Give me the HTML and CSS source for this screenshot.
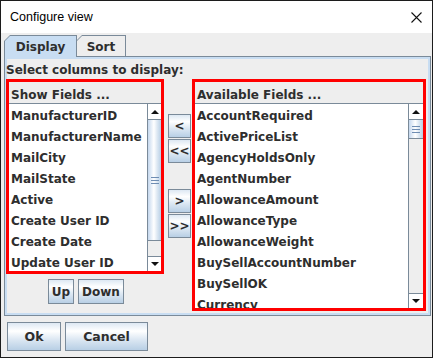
FILE: index.html
```html
<!DOCTYPE html>
<html>
<head>
<meta charset="utf-8">
<link rel="stylesheet" href="styles.css">
</head>
<body>
<div class="win">
  <div class="titlebar">
    <span class="title">Configure view</span>
    <svg class="close" width="11" height="11" viewBox="0 0 11 11"><path d="M0.5 0.5L10.5 10.5M10.5 0.5L0.5 10.5" stroke="#111" stroke-width="1.1" fill="none"/></svg>
  </div>
  <div class="tabs">
    <div class="tab sel"><div class="tab-in">Display</div></div>
    <div class="tab sort"><div class="tab-in">Sort</div></div>
  </div>
  <div class="panel">
    <div class="label">Select columns to display:</div>
    <div class="main">
      <div class="leftcol">
        <div class="box box-left">
          <div class="hdr">Show Fields ...</div>
          <div class="list">
            <div class="items">
              <div class="row">ManufacturerID</div>
              <div class="row">ManufacturerName</div>
              <div class="row">MailCity</div>
              <div class="row">MailState</div>
              <div class="row">Active</div>
              <div class="row">Create User ID</div>
              <div class="row">Create Date</div>
              <div class="row">Update User ID</div>
            </div>
            <div class="sb sb-left">
              <div class="sb-up"></div>
              <div class="sb-thumb thumb-left"><div class="grip"></div></div>
              <div class="sb-track"></div>
              <div class="sb-down"></div>
            </div>
          </div>
        </div>
        <div class="updown">
          <button class="btn up">Up</button>
          <button class="btn down">Down</button>
        </div>
      </div>
      <div class="midcol">
        <button class="btn mb">&lt;</button>
        <button class="btn mb">&lt;&lt;</button>
        <button class="btn mb gapped">&gt;</button>
        <button class="btn mb">&gt;&gt;</button>
      </div>
      <div class="box box-right">
        <div class="hdr">Available Fields ...</div>
        <div class="list">
          <div class="items">
            <div class="row">AccountRequired</div>
            <div class="row">ActivePriceList</div>
            <div class="row">AgencyHoldsOnly</div>
            <div class="row">AgentNumber</div>
            <div class="row">AllowanceAmount</div>
            <div class="row">AllowanceType</div>
            <div class="row">AllowanceWeight</div>
            <div class="row">BuySellAccountNumber</div>
            <div class="row">BuySellOK</div>
            <div class="row">Currency</div>
          </div>
          <div class="sb sb-right">
            <div class="sb-up"></div>
            <div class="sb-thumb thumb-right"><div class="grip"></div></div>
            <div class="sb-track"></div>
            <div class="sb-down"></div>
          </div>
        </div>
      </div>
    </div>
  </div>
  <div class="bottombar">
    <button class="btn ok">Ok</button>
    <button class="btn cancel">Cancel</button>
  </div>
</div>
</body>
</html>
```
FILE: styles.css
```css
* { box-sizing: border-box; }
body { margin: 0; }
.win {
  width: 433px; height: 358px;
  border: 1px solid #1c1c1c;
  background: #eeeeee;
  display: flex; flex-direction: column;
  font-family: "DejaVu Sans", sans-serif;
  font-weight: bold; font-size: 12px; color: #2e2e2e;
}
.titlebar {
  height: 32px; flex: none; background: #fff;
  display: flex; align-items: center; justify-content: space-between;
  padding: 0 10px 0 9px;
  font: 12.5px "Liberation Sans", Arial, sans-serif; color: #000;
}
.close { display: block; }
.tabs {
  height: 23px; flex: none; display: flex; align-items: flex-start;
  padding: 2px 0 0 3px;
}
.tab {
  height: 21px; padding: 1px 1px 0 1px; background: #7a8a99;
  clip-path: polygon(0 6px, 6px 0, 100% 0, 100% 100%, 0 100%);
}
.tab.sel { height: 22px; width: 73px; position: relative; z-index: 1; }
.tab.sort { width: 50px; margin-left: -1px; }
.tab-in {
  height: 100%; background: #eeeeee;
  clip-path: polygon(0 5px, 5px 0, 100% 0, 100% 100%, 0 100%);
  display: flex; align-items: center; justify-content: center; padding-top: 1px;
}
.tab.sel .tab-in { background: #c8ddf2; padding-top: 0; }
.panel {
  height: 260px; flex: none;
  margin: 0 1px 0 3px;
  border: 1px solid #7a8a99;
  box-shadow: inset 0 0 0 2px #c8ddf2;
  padding: 0 4px 0 1px;
}
.label { height: 22px; padding-top: 5px; line-height: 17px; white-space: nowrap; }
.main { display: flex; align-items: flex-start; }
.leftcol { width: 158px; flex: none; }
.box { border: 3px solid #ff0000; display: flex; flex-direction: column; }
.box-left { height: 195px; }
.box-right { height: 232px; flex: 1; }
.hdr { height: 21px; flex: none; padding: 5px 0 0 2px; line-height: 16px; white-space: nowrap; }
.list { flex: 1; min-height: 0; display: flex; border-top: 1px solid #7a8a99; }
.items { flex: 1; background: #fff; overflow: hidden; padding-top: 1px; }
.row { height: 21px; line-height: 23px; padding-left: 2px; white-space: nowrap; }
.sb { flex: none; border-left: 1px solid #7a8a99; display: flex; flex-direction: column; background: #eeeeee; }
.sb-left { width: 14px; }
.sb-right { width: 15px; }
.sb-up, .sb-down {
  height: 15px; flex: none; background: #fff;
  display: flex; align-items: center; justify-content: center;
}
.sb-up::before {
  content: ""; border-left: 4px solid transparent; border-right: 4px solid transparent;
  border-bottom: 4px solid #111;
}
.sb-down { border-top: 1px solid #7a8a99; }
.sb-down::before {
  content: ""; border-left: 4px solid transparent; border-right: 4px solid transparent;
  border-top: 4px solid #111;
}
.sb-thumb {
  flex: none;
  border-top: 1px solid #7a8a99; border-bottom: 1px solid #7a8a99;
  background: linear-gradient(to right, #c5d8ee 0%, #ffffff 45%, #dde8f3 70%, #b8cfe5 100%);
  display: flex; align-items: center; justify-content: center;
}
.thumb-left { height: 122px; }
.thumb-right { height: 20px; }
.grip {
  width: 8px; height: 7px;
  background: repeating-linear-gradient(to bottom, #6f8db3 0 1px, transparent 1px 3px);
}
.sb-track { flex: 1; }
.btn {
  font: bold 12px "DejaVu Sans", sans-serif; color: #2e2e2e;
  border: 1px solid #7a8a99; padding: 0; margin: 0;
  background: linear-gradient(to bottom, #dde8f3 0%, #ffffff 30%, #dde8f3 60%, #b8cfe5 100%);
  display: flex; align-items: center; justify-content: center;
}
.updown { display: flex; gap: 4px; margin: 5px 0 0 42px; }
.up { width: 26px; height: 25px; }
.down { width: 46px; height: 25px; }
.midcol {
  width: 23px; flex: none; margin: 0 1px 0 4px;
  display: flex; flex-direction: column; gap: 1px; padding-top: 35px;
}
.mb { width: 23px; height: 24px; }
.mb.gapped { margin-top: 25px; }
.bottombar { flex: 1; display: flex; align-items: flex-start; gap: 4px; padding: 6px 0 0 6px; }
.ok { width: 54px; height: 29px; font-size: 12.5px; }
.cancel { width: 83px; height: 29px; font-size: 12.5px; }
```
